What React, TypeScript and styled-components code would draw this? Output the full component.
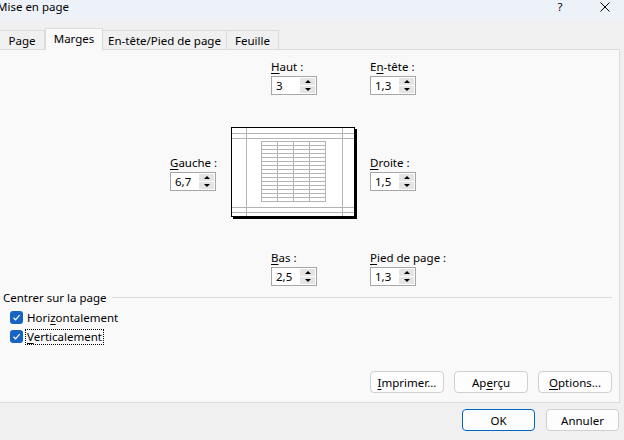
import React from 'react';
import styled, { createGlobalStyle } from 'styled-components';

const Global = createGlobalStyle`
  html, body { margin: 0; padding: 0; background: #f0f0f0; }
  body { font-family: "Noto Sans", "Segoe UI", sans-serif; font-size: 11px; color: #000; }
  #root { width: 624px; height: 440px; overflow: hidden; }
  u { text-decoration: underline; text-underline-offset: 2px; }
`;

const Window = styled.div`
  width: 624px;
  height: 440px;
  display: flex;
  flex-direction: column;
  background: #f0f0f0;
  overflow: hidden;
`;

const TitleBar = styled.div`
  height: 20px;
  flex: none;
  background: #edf2f8;
  display: flex;
  align-items: flex-start;
  line-height: 14px;
`;

const Title = styled.div`
  margin-left: -3px;
  flex: 1;
  font-size: 11.5px;
`;

const TitleBtn = styled.div<{ $w: number; $ml?: number }>`
  width: ${p => p.$w}px;
  margin-left: ${p => p.$ml ?? 0}px;
  height: 14px;
  display: flex;
  align-items: center;
  justify-content: center;
  font-size: 11.5px;
`;

const TabStrip = styled.div`
  height: 29px;
  flex: none;
  display: flex;
  align-items: flex-end;
  position: relative;
  z-index: 1;
`;

const Tab = styled.div<{ $w: number; $active?: boolean }>`
  box-sizing: border-box;
  width: ${p => p.$w}px;
  height: ${p => (p.$active ? 22 : 19)}px;
  margin-bottom: ${p => (p.$active ? -1 : 0)}px;
  border: 1px solid #dcdcdc;
  border-left: ${p => (p.$active ? '1px solid #dcdcdc' : 'none')};
  border-bottom: none;
  background: ${p => (p.$active ? '#f9f9f9' : '#f0f0f0')};
  display: flex;
  align-items: center;
  justify-content: center;
  padding-bottom: ${p => (p.$active ? 3 : 0)}px;
  font-size: 11.5px;
`;

const Panel = styled.div`
  box-sizing: border-box;
  width: 620px;
  height: 354px;
  flex: none;
  background: #f9f9f9;
  border: 1px solid #dcdcdc;
  border-left: none;
  padding: 10px 7px 9px 0;
  display: flex;
  flex-direction: column;
`;

const MarginsGrid = styled.div`
  padding-left: 170px;
  display: grid;
  grid-template-columns: 48px 126px 46px;
  grid-template-rows: 35px 92px 35px;
  column-gap: 13px;
  row-gap: 32px;
  align-items: center;
`;

const FieldWrap = styled.div<{ $col: number; $row: number; $center?: boolean }>`
  grid-column: ${p => p.$col};
  grid-row: ${p => p.$row};
  justify-self: ${p => (p.$center ? 'center' : 'start')};
  display: flex;
  flex-direction: column;
  gap: 2px;
  width: 46px;
  white-space: nowrap;
`;

const FieldLabel = styled.div`
  height: 14px;
  line-height: 14px;
  font-size: 11.5px;
`;

const SpinBox = styled.div`
  box-sizing: border-box;
  width: 46px;
  height: 19px;
  border: 1px solid #a6a6a6;
  background: #fff;
  display: flex;
`;

const SpinValue = styled.div`
  flex: 1;
  padding-left: 4px;
  line-height: 17px;
  font-size: 11.5px;
`;

const SpinCol = styled.div`
  width: 15px;
  display: flex;
  flex-direction: column;
  gap: 1px;
  padding: 1px 1px 1px 0;
`;

const SpinBtn = styled.div<{ $down?: boolean }>`
  flex: 1;
  background: #e4e4e4;
  display: flex;
  align-items: center;
  justify-content: center;
  &::after {
    content: '';
    width: 0;
    height: 0;
    border-left: 3px solid transparent;
    border-right: 3px solid transparent;
    ${p => (p.$down ? 'border-top: 3px solid #000;' : 'border-bottom: 3px solid #000;')}
  }
`;

const PreviewCell = styled.div`
  grid-column: 2;
  grid-row: 2;
  width: 126px;
  height: 92px;
`;

const GroupHeader = styled.div`
  margin-top: 4px;
  height: 14px;
  display: flex;
  align-items: center;
  padding-left: 3px;
  font-size: 11.5px;
`;

const GroupLine = styled.div`
  flex: 1;
  height: 1px;
  background: #dcdcdc;
  margin-left: 5px;
`;

const CheckList = styled.div`
  margin-top: 4px;
  padding-left: 10px;
  display: flex;
  flex-direction: column;
`;

const CheckRow = styled.div`
  height: 19px;
  display: flex;
  align-items: center;
  gap: 2px;
`;

const Box = styled.div`
  width: 13px;
  height: 13px;
  border-radius: 3px;
  background: #1864c2;
  display: flex;
  align-items: center;
  justify-content: center;
`;

const CheckLabel = styled.span<{ $focus?: boolean }>`
  font-size: 11.5px;
  line-height: 14px;
  padding: 0 1px;
  border: 1px dotted ${p => (p.$focus ? '#000' : 'transparent')};
`;

const ButtonRow = styled.div`
  margin-top: auto;
  display: flex;
  justify-content: flex-end;
  gap: 10px;
`;

const Button = styled.div<{ $default?: boolean; $w?: number }>`
  box-sizing: border-box;
  width: ${p => p.$w ?? 74}px;
  height: 22px;
  border-radius: 4px;
  background: #fdfdfd;
  border: 1px solid ${p => (p.$default ? '#0067c0' : '#d0d0d0')};
  box-shadow: ${p => (p.$default ? 'inset 0 0 0 1px #ffffff' : 'none')};
  display: flex;
  align-items: center;
  justify-content: center;
  font-size: 11.5px;
`;

const Footer = styled.div`
  flex: 1;
  display: flex;
  justify-content: flex-end;
  align-items: flex-start;
  gap: 11px;
  padding: 6px 5px 0 0;
`;

const Spin: React.FC<{ label: React.ReactNode; value: string; col: number; row: number; center?: boolean }> = ({
  label,
  value,
  col,
  row,
  center,
}) => (
  <FieldWrap $col={col} $row={row} $center={center}>
    <FieldLabel>{label}</FieldLabel>
    <SpinBox>
      <SpinValue>{value}</SpinValue>
      <SpinCol>
        <SpinBtn />
        <SpinBtn $down />
      </SpinCol>
    </SpinBox>
  </FieldWrap>
);

const PagePreview = () => {
  const g = '#b4b4b4';
  const rows = Array.from({ length: 16 }, (_, i) => 14 + i * 4);
  const cols = [30, 46, 62, 78, 94];
  return (
    <svg width="126" height="92" viewBox="0 0 126 92">
      <rect x="2" y="2" width="124" height="90" fill="#000" />
      <rect x="0.5" y="0.5" width="123" height="89" fill="#fff" stroke="#000" />
      <g stroke={g} strokeWidth="1" shapeRendering="crispEdges">
        <line x1="1" y1="6.5" x2="123" y2="6.5" />
        <line x1="1" y1="11.5" x2="123" y2="11.5" />
        <line x1="1" y1="80.5" x2="123" y2="80.5" />
        <line x1="1" y1="85.5" x2="123" y2="85.5" />
        <line x1="15.5" y1="1" x2="15.5" y2="89" />
        <line x1="111.5" y1="1" x2="111.5" y2="89" />
        {rows.map(y => (
          <line key={y} x1="30" y1={y + 0.5} x2="95" y2={y + 0.5} />
        ))}
        {cols.map(x => (
          <line key={x} x1={x + 0.5} y1="14" x2={x + 0.5} y2="75" />
        ))}
      </g>
    </svg>
  );
};

const Check = () => (
  <Box>
    <svg width="9" height="9" viewBox="0 0 9 9">
      <polyline points="1.5,4.8 3.6,6.8 7.6,2.2" fill="none" stroke="#fff" strokeWidth="1.2" />
    </svg>
  </Box>
);

export default function App() {
  return (
    <Window>
      <Global />
      <TitleBar>
        <Title>Mise en page</Title>
        <TitleBtn $w={12}>?</TitleBtn>
        <TitleBtn $w={24} $ml={27}>
          <svg width="10" height="10" viewBox="0 0 10 10">
            <path d="M0.5 0.5 L9.5 9.5 M9.5 0.5 L0.5 9.5" stroke="#000" strokeWidth="1" />
          </svg>
        </TitleBtn>
        <TitleBtn $w={7} />
      </TitleBar>
      <TabStrip>
        <Tab $w={45}>Page</Tab>
        <Tab $w={58} $active>Marges</Tab>
        <Tab $w={124}>En-tête/Pied de page</Tab>
        <Tab $w={52}>Feuille</Tab>
      </TabStrip>
      <Panel>
        <MarginsGrid>
          <Spin col={2} row={1} center label={<><u>H</u>aut :</>} value="3" />
          <Spin col={3} row={1} label={<>E<u>n</u>-tête :</>} value="1,3" />
          <Spin col={1} row={2} label={<><u>G</u>auche :</>} value="6,7" />
          <PreviewCell>
            <PagePreview />
          </PreviewCell>
          <Spin col={3} row={2} label={<><u>D</u>roite :</>} value="1,5" />
          <Spin col={2} row={3} center label={<><u>B</u>as :</>} value="2,5" />
          <Spin col={3} row={3} label={<><u>P</u>ied de page :</>} value="1,3" />
        </MarginsGrid>
        <GroupHeader>
          Centrer sur la page
          <GroupLine />
        </GroupHeader>
        <CheckList>
          <CheckRow>
            <Check />
            <CheckLabel>Hori<u>z</u>ontalement</CheckLabel>
          </CheckRow>
          <CheckRow>
            <Check />
            <CheckLabel $focus><u>V</u>erticalement</CheckLabel>
          </CheckRow>
        </CheckList>
        <ButtonRow>
          <Button><span><u>I</u>mprimer...</span></Button>
          <Button><span>Ap<u>e</u>rçu</span></Button>
          <Button><span><u>O</u>ptions...</span></Button>
        </ButtonRow>
      </Panel>
      <Footer>
        <Button $default $w={73}>OK</Button>
        <Button $w={73}>Annuler</Button>
      </Footer>
    </Window>
  );
}
